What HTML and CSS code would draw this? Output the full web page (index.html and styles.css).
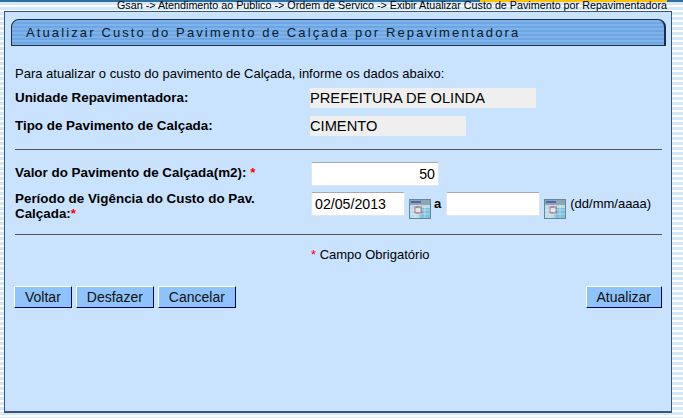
FILE: index.html
```html
<!DOCTYPE html>
<html>
<head>
  <meta charset="UTF-8">
  <title>Atualizar Custo do Pavimento de Calçada</title>
  <link rel="stylesheet" href="styles.css">
</head>
<body>
  <div class="top-strip"></div>
  <div class="breadcrumb">Gsan -&gt; Atendimento ao Publico -&gt; Ordem de Servico -&gt; Exibir Atualizar Custo de Pavimento por Repavimentadora</div>

  <div class="panel">
    <div class="title-bar">Atualizar Custo do Pavimento de Calçada por Repavimentadora</div>

    <div class="content">
      <p class="intro">Para atualizar o custo do pavimento de Calçada, informe os dados abaixo:</p>

      <div class="row row-info">
        <div class="label">Unidade Repavimentadora:</div>
        <div class="readonly readonly-wide">PREFEITURA DE OLINDA</div>
      </div>
      <div class="row row-info">
        <div class="label">Tipo de Pavimento de Calçada:</div>
        <div class="readonly readonly-small">CIMENTO</div>
      </div>

      <hr class="line line-first">

      <div class="row row-value">
        <div class="label">Valor do Pavimento de Calçada(m2): <span class="req">*</span></div>
        <input class="field field-value" type="text" value="50">
      </div>
      <div class="row row-date">
        <div class="label">Período de Vigência do Custo do Pav. Calçada:<span class="req">*</span></div>
        <input class="field field-date" type="text" value="02/05/2013">
        <svg class="cal" width="22" height="20" viewBox="0 0 22 20">
          <rect width="22" height="20" fill="#5d8a9c"/>
          <rect x="1" y="1" width="20" height="18" fill="#bcdcea"/>
          <rect x="1" y="1" width="20" height="5" fill="#8fa6b2"/>
          <rect x="2" y="2" width="10" height="2" fill="#5560b0"/>
          <rect x="10" y="9" width="11" height="10" fill="#7cc0dc"/>
          <rect x="6" y="8" width="6" height="6" fill="#d8e4ea" stroke="#a06a78" stroke-width="1.4"/>
          <path d="M1 11h20M1 15h20M6 6v13M11 6v13M16 6v13" stroke="#fff" stroke-opacity=".4"/>
        </svg>
        <span class="sep">a</span>
        <input class="field field-date" type="text">
        <svg class="cal" width="22" height="20" viewBox="0 0 22 20">
          <rect width="22" height="20" fill="#5d8a9c"/>
          <rect x="1" y="1" width="20" height="18" fill="#bcdcea"/>
          <rect x="1" y="1" width="20" height="5" fill="#8fa6b2"/>
          <rect x="2" y="2" width="10" height="2" fill="#5560b0"/>
          <rect x="10" y="9" width="11" height="10" fill="#7cc0dc"/>
          <rect x="6" y="8" width="6" height="6" fill="#d8e4ea" stroke="#a06a78" stroke-width="1.4"/>
          <path d="M1 11h20M1 15h20M6 6v13M11 6v13M16 6v13" stroke="#fff" stroke-opacity=".4"/>
        </svg>
        <span class="hint">(dd/mm/aaaa)</span>
      </div>

      <hr class="line line-second">

      <div class="required-note"><span class="req">*</span> Campo Obrigatório</div>

      <div class="buttons">
        <button class="btn">Voltar</button>
        <button class="btn">Desfazer</button>
        <button class="btn">Cancelar</button>
        <button class="btn btn-right">Atualizar</button>
      </div>
    </div>
  </div>
</body>
</html>
```

FILE: styles.css
```css
body {
  margin: 0;
  height: 418px;
  overflow: hidden;
  font-family: "Liberation Sans", Arial, sans-serif;
  font-size: 13px;
  color: #000;
  background: repeating-linear-gradient(to bottom, #fff 0, #fff 2px, #d5e8f8 2px, #d5e8f8 5px);
}

.top-strip {
  height: 2px;
  background: linear-gradient(to right, #2f6f9f 0, #2f6f9f 480px, #ffc000 480px, #ffc000 667px, #2f6f9f 667px);
}

.breadcrumb {
  height: 9px;
  line-height: 7px;
  font-size: 10.75px;
  text-align: right;
  padding-right: 16px;
  white-space: nowrap;
}

.panel {
  box-sizing: border-box;
  width: 668px;
  height: 402px;
  margin-left: 4px;
  padding: 7px 5px 0 6px;
  background: #c9e3fe;
  border: 1px solid #33567a;
  border-bottom-width: 2px;
}

.title-bar {
  box-sizing: border-box;
  height: 27px;
  line-height: 25px;
  padding-left: 14px;
  font-size: 13px;
  letter-spacing: 2.12px;
  white-space: nowrap;
  color: #0a1a2a;
  border: 1px solid #1c2f42;
  border-right-width: 2px;
  border-top-left-radius: 8px;
  border-top-right-radius: 8px;
  background: repeating-linear-gradient(to bottom, #7db4ee 0, #7db4ee 2px, #6fa6e2 2px, #6fa6e2 4px);
}

.content {
  padding: 0 4px 0 4px;
}

.intro {
  margin: 20px 0 0;
  line-height: 15px;
}

.row {
  display: flex;
  align-items: flex-start;
}

.label {
  width: 296px;
  flex: none;
  font-size: 13.4px;
  font-weight: bold;
  line-height: 15px;
}

.row-info {
  height: 28px;
}

.row-info .label {
  padding-top: 2px;
}

.intro + .row-info {
  margin-top: 7px;
}

.readonly {
  height: 20px;
  line-height: 20px;
  font-size: 14.67px;
  background: #efefef;
  margin-left: -1px;
}

.readonly-wide {
  width: 226px;
}

.readonly-small {
  width: 156px;
}

.line {
  margin: 0;
  height: 1px;
  border: 0;
  background: #555;
}

.line-first {
  margin-top: 5px;
}

.row-value {
  margin-top: 12px;
}

.row-value .label {
  padding-top: 3px;
}

.field {
  box-sizing: border-box;
  height: 24px;
  margin: 0;
  padding: 1px 3px;
  font-family: inherit;
  font-size: 14.2px;
  background: #fff;
  border: 1px solid #dfe6ee;
  border-top-color: #a9a9a9;
  border-radius: 2px;
}

.field-value {
  width: 128px;
  text-align: right;
}

.row-date {
  margin-top: 6px;
}

.row-date .label {
  margin-top: -1px;
}

.field-date {
  width: 94px;
}

.cal {
  margin: 7px 0 0 4px;
  flex: none;
}

.sep {
  margin: 4px 5px 0 3px;
  font-weight: bold;
}

.hint {
  margin: 4px 0 0 4px;
  white-space: nowrap;
}

.line-second {
  margin-top: 13px;
}

.required-note {
  margin: 12px 0 0 296px;
  line-height: 15px;
}

.req {
  color: #f00;
}

.buttons {
  display: flex;
  gap: 4px;
  margin: 24px 0 0 -1px;
}

.btn {
  box-sizing: border-box;
  height: 22px;
  padding: 0 10px;
  font-family: inherit;
  font-size: 14px;
  color: #111;
  background: #8fc3fb;
  border: 1px solid #000060;
  border-top-color: #fff;
  border-left-color: #fff;
}

.btn-right {
  margin-left: auto;
}
```
